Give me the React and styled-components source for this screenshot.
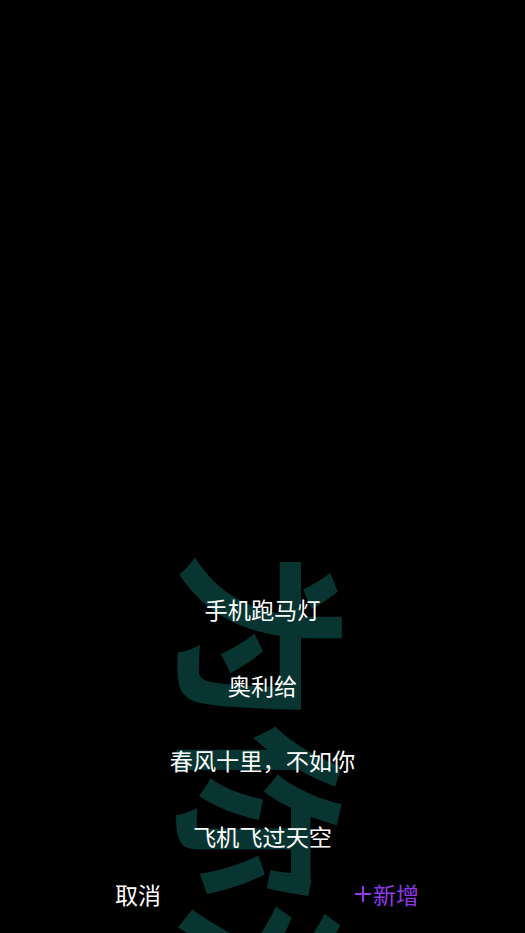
import React from 'react';
import styled, { createGlobalStyle } from 'styled-components';

const items = ['手机跑马灯', '奥利给', '春风十里，不如你', '飞机飞过天空'];

const App = () => (
  <>
    <GlobalStyle />
    <Screen>
      <Marquee>为你流</Marquee>
      <Sheet>
        <List>
          {items.map((text) => (
            <Item key={text}>{text}</Item>
          ))}
        </List>
        <Actions>
          <ActionButton>取消</ActionButton>
          <ActionButton $accent>
            <Plus viewBox="0 0 16 16">
              <path d="M0 8h16M8 0v16" />
            </Plus>
            新增
          </ActionButton>
        </Actions>
      </Sheet>
    </Screen>
  </>
);

export default App;

const GlobalStyle = createGlobalStyle`
  html, body {
    margin: 0;
    padding: 0;
    background: #000;
  }
`;

const Screen = styled.div`
  position: relative;
  width: 525px;
  height: 933px;
  overflow: hidden;
  background: #000;
  display: flex;
  flex-direction: column;
  justify-content: flex-end;
  font-family: "Noto Sans CJK SC", "Liberation Sans", sans-serif;
`;

// running text of the marquee, turned a quarter to read downwards
const Marquee = styled.div`
  position: absolute;
  left: 178px;
  top: 549px;
  writing-mode: vertical-rl;
  text-orientation: sideways;
  white-space: nowrap;
  font-size: 176px;
  line-height: 180px;
  font-weight: 700;
  color: #083531;
`;

const Sheet = styled.div`
  position: relative;
  display: flex;
  flex-direction: column;
  padding-bottom: 2px;
`;

const List = styled.div`
  display: flex;
  flex-direction: column;
  align-items: center;
`;

const Item = styled.div`
  height: 75.5px;
  line-height: 75.5px;
  font-size: 23.2px;
  color: #fff;
`;

const Actions = styled.div`
  display: flex;
  height: 75px;
  margin-top: -18px;
  padding: 0 13.5px;
`;

const ActionButton = styled.div`
  flex: 1;
  display: flex;
  align-items: center;
  justify-content: center;
  font-size: 23px;
  color: ${(p) => (p.$accent ? '#9039e8' : '#fff')};
`;

const Plus = styled.svg`
  width: 16px;
  height: 16px;
  margin-right: 2px;
  fill: none;
  stroke: currentColor;
  stroke-width: 2;
`;
